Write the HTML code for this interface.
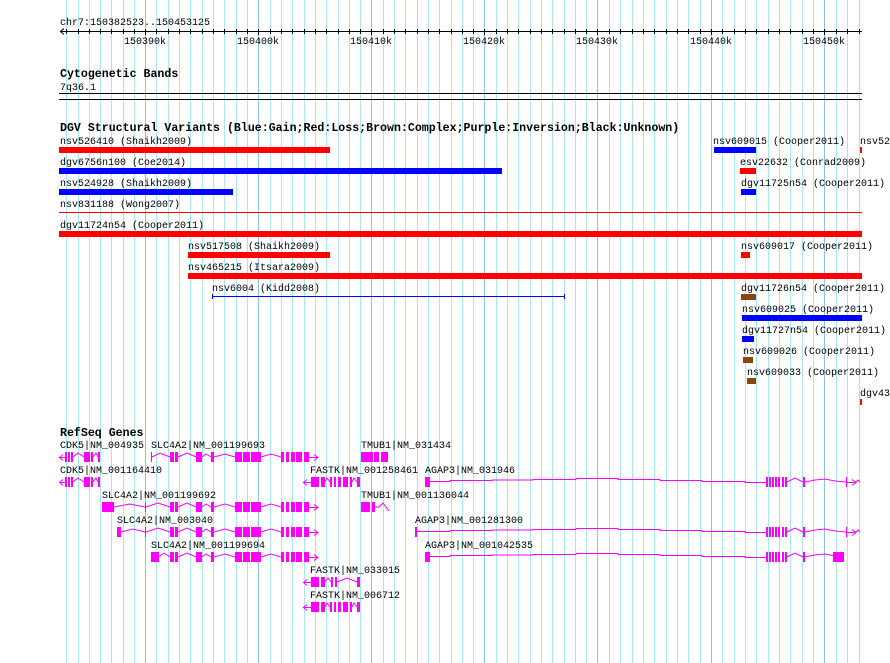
<!DOCTYPE html>
<html><head><meta charset="utf-8"><style>
html,body{margin:0;padding:0;background:#fff;width:890px;height:663px;overflow:hidden}
svg{display:block}
text{font-family:"Liberation Mono",monospace;font-size:10px;fill:#000}
.b{font-weight:bold;font-size:11.6px}
.g line{stroke:#a8e6f0;stroke-width:1}
.g line.m{stroke:#8cc4e6}
.mg{fill:#f0f}
.in{fill:none;stroke:#f0f;stroke-width:1}
</style></head><body>
<svg width="890" height="663" viewBox="0 0 890 663" xmlns="http://www.w3.org/2000/svg">
<g class="g">
<line x1="66.5" y1="0" x2="66.5" y2="663"/><line x1="78.5" y1="0" x2="78.5" y2="663"/><line x1="89.5" y1="0" x2="89.5" y2="663"/><line x1="100.5" y1="0" x2="100.5" y2="663"/><line x1="111.5" y1="0" x2="111.5" y2="663"/><line x1="123.5" y1="0" x2="123.5" y2="663"/><line x1="134.5" y1="0" x2="134.5" y2="663"/><line class="m" x1="145.5" y1="0" x2="145.5" y2="663"/><line x1="156.5" y1="0" x2="156.5" y2="663"/><line x1="168.5" y1="0" x2="168.5" y2="663"/><line x1="179.5" y1="0" x2="179.5" y2="663"/><line x1="190.5" y1="0" x2="190.5" y2="663"/><line x1="202.5" y1="0" x2="202.5" y2="663"/><line x1="213.5" y1="0" x2="213.5" y2="663"/><line x1="224.5" y1="0" x2="224.5" y2="663"/><line x1="236.5" y1="0" x2="236.5" y2="663"/><line x1="247.5" y1="0" x2="247.5" y2="663"/><line class="m" x1="258.5" y1="0" x2="258.5" y2="663"/><line x1="270.5" y1="0" x2="270.5" y2="663"/><line x1="281.5" y1="0" x2="281.5" y2="663"/><line x1="292.5" y1="0" x2="292.5" y2="663"/><line x1="304.5" y1="0" x2="304.5" y2="663"/><line x1="315.5" y1="0" x2="315.5" y2="663"/><line x1="326.5" y1="0" x2="326.5" y2="663"/><line x1="338.5" y1="0" x2="338.5" y2="663"/><line x1="349.5" y1="0" x2="349.5" y2="663"/><line x1="360.5" y1="0" x2="360.5" y2="663"/><line class="m" x1="371.5" y1="0" x2="371.5" y2="663"/><line x1="383.5" y1="0" x2="383.5" y2="663"/><line x1="394.5" y1="0" x2="394.5" y2="663"/><line x1="405.5" y1="0" x2="405.5" y2="663"/><line x1="417.5" y1="0" x2="417.5" y2="663"/><line x1="428.5" y1="0" x2="428.5" y2="663"/><line x1="439.5" y1="0" x2="439.5" y2="663"/><line x1="451.5" y1="0" x2="451.5" y2="663"/><line x1="462.5" y1="0" x2="462.5" y2="663"/><line x1="473.5" y1="0" x2="473.5" y2="663"/><line class="m" x1="484.5" y1="0" x2="484.5" y2="663"/><line x1="496.5" y1="0" x2="496.5" y2="663"/><line x1="507.5" y1="0" x2="507.5" y2="663"/><line x1="518.5" y1="0" x2="518.5" y2="663"/><line x1="530.5" y1="0" x2="530.5" y2="663"/><line x1="541.5" y1="0" x2="541.5" y2="663"/><line x1="552.5" y1="0" x2="552.5" y2="663"/><line x1="564.5" y1="0" x2="564.5" y2="663"/><line x1="575.5" y1="0" x2="575.5" y2="663"/><line x1="586.5" y1="0" x2="586.5" y2="663"/><line class="m" x1="597.5" y1="0" x2="597.5" y2="663"/><line x1="609.5" y1="0" x2="609.5" y2="663"/><line x1="620.5" y1="0" x2="620.5" y2="663"/><line x1="632.5" y1="0" x2="632.5" y2="663"/><line x1="643.5" y1="0" x2="643.5" y2="663"/><line x1="654.5" y1="0" x2="654.5" y2="663"/><line x1="666.5" y1="0" x2="666.5" y2="663"/><line x1="677.5" y1="0" x2="677.5" y2="663"/><line x1="688.5" y1="0" x2="688.5" y2="663"/><line x1="700.5" y1="0" x2="700.5" y2="663"/><line class="m" x1="711.5" y1="0" x2="711.5" y2="663"/><line x1="722.5" y1="0" x2="722.5" y2="663"/><line x1="734.5" y1="0" x2="734.5" y2="663"/><line x1="745.5" y1="0" x2="745.5" y2="663"/><line x1="756.5" y1="0" x2="756.5" y2="663"/><line x1="768.5" y1="0" x2="768.5" y2="663"/><line x1="779.5" y1="0" x2="779.5" y2="663"/><line x1="790.5" y1="0" x2="790.5" y2="663"/><line x1="802.5" y1="0" x2="802.5" y2="663"/><line x1="813.5" y1="0" x2="813.5" y2="663"/><line class="m" x1="824.5" y1="0" x2="824.5" y2="663"/><line x1="836.5" y1="0" x2="836.5" y2="663"/><line x1="847.5" y1="0" x2="847.5" y2="663"/><line x1="859.5" y1="0" x2="859.5" y2="663"/>
</g>

<!-- ruler -->
<text x="60" y="25">chr7:150382523..150453125</text>
<line x1="60" y1="31.5" x2="862" y2="31.5" stroke="#000"/>
<polyline points="64,28.5 60.5,31.5 64,34.5" fill="none" stroke="#000"/>
<g stroke="#000">
<path d="M66.5 29v5M78.5 29v5M89.5 29v5M100.5 29v5M111.5 29v5M123.5 29v5M134.5 29v5M145.5 29v6M156.5 29v5M168.5 29v5M179.5 29v5M190.5 29v5M202.5 29v5M213.5 29v5M224.5 29v5M236.5 29v5M247.5 29v5M258.5 29v6M270.5 29v5M281.5 29v5M292.5 29v5M304.5 29v5M315.5 29v5M326.5 29v5M338.5 29v5M349.5 29v5M360.5 29v5M371.5 29v6M383.5 29v5M394.5 29v5M405.5 29v5M417.5 29v5M428.5 29v5M439.5 29v5M451.5 29v5M462.5 29v5M473.5 29v5M484.5 29v6M496.5 29v5M507.5 29v5M518.5 29v5M530.5 29v5M541.5 29v5M552.5 29v5M564.5 29v5M575.5 29v5M586.5 29v5M597.5 29v6M609.5 29v5M620.5 29v5M632.5 29v5M643.5 29v5M654.5 29v5M666.5 29v5M677.5 29v5M688.5 29v5M700.5 29v5M711.5 29v6M722.5 29v5M734.5 29v5M745.5 29v5M756.5 29v5M768.5 29v5M779.5 29v5M790.5 29v5M802.5 29v5M813.5 29v5M824.5 29v6M836.5 29v5M847.5 29v5M859.5 29v5"/>
</g>
<text x="124" y="44">150390k</text><text x="237" y="44">150400k</text><text x="350" y="44">150410k</text><text x="463" y="44">150420k</text><text x="576" y="44">150430k</text><text x="690" y="44">150440k</text><text x="803" y="44">150450k</text>

<!-- cytoband -->
<text class="b" x="60" y="77">Cytogenetic Bands</text>
<text x="60" y="90">7q36.1</text>
<rect x="59" y="93" width="803" height="1" fill="#000"/>
<rect x="59" y="99" width="803" height="1" fill="#000"/>

<!-- DGV -->
<text class="b" x="60" y="131">DGV Structural Variants (Blue:Gain;Red:Loss;Brown:Complex;Purple:Inversion;Black:Unknown)</text>
<text x="60" y="144">nsv526410 (Shaikh2009)</text><rect x="59" y="147" width="271" height="6" fill="#f00"/>
<text x="60" y="165">dgv6756n100 (Coe2014)</text><rect x="59" y="168" width="443" height="6" fill="#00f"/>
<text x="60" y="186">nsv524928 (Shaikh2009)</text><rect x="59" y="189" width="174" height="6" fill="#00f"/>
<text x="60" y="207">nsv831188 (Wong2007)</text><rect x="59" y="212" width="803" height="1" fill="#f00"/>
<text x="60" y="228">dgv11724n54 (Cooper2011)</text><rect x="59" y="231" width="803" height="6" fill="#f00"/>
<text x="188" y="249">nsv517508 (Shaikh2009)</text><rect x="188" y="252" width="142" height="6" fill="#f00"/>
<text x="188" y="270">nsv465215 (Itsara2009)</text><rect x="188" y="273" width="674" height="6" fill="#f00"/>
<text x="212" y="291">nsv6004 (Kidd2008)</text>
<path d="M212 296.5H565M212.5 294v5M564.5 294v5" stroke="#00f" fill="none"/>

<text x="713" y="144">nsv609015 (Cooper2011)</text><rect x="714" y="147" width="42" height="6" fill="#00f"/>
<text x="860" y="144">nsv52</text><rect x="860" y="147" width="2" height="6" fill="#f00"/>
<text x="740" y="165">esv22632 (Conrad2009)</text><rect x="740" y="168" width="16" height="6" fill="#f00"/>
<text x="741" y="186">dgv11725n54 (Cooper2011)</text><rect x="741" y="189" width="15" height="6" fill="#00f"/>
<text x="741" y="249">nsv609017 (Cooper2011)</text><rect x="741" y="252" width="9" height="6" fill="#f00"/>
<text x="741" y="291">dgv11726n54 (Cooper2011)</text><rect x="741" y="294" width="15" height="6" fill="#8b4513"/>
<text x="742" y="312">nsv609025 (Cooper2011)</text><rect x="742" y="315" width="120" height="6" fill="#00f"/>
<text x="742" y="333">dgv11727n54 (Cooper2011)</text><rect x="742" y="336" width="12" height="6" fill="#00f"/>
<text x="743" y="354">nsv609026 (Cooper2011)</text><rect x="743" y="357" width="10" height="6" fill="#8b4513"/>
<text x="747" y="375">nsv609033 (Cooper2011)</text><rect x="747" y="378" width="9" height="6" fill="#8b4513"/>
<text x="860" y="396">dgv43</text><rect x="860" y="399" width="2" height="6" fill="#f00"/>

<!-- RefSeq -->
<text class="b" x="60" y="436">RefSeq Genes</text>
<defs>
<g id="slcTail">
<rect class="mg" x="196" y="-5" width="6" height="10"/><rect class="mg" x="211" y="-5" width="3" height="10"/>
<rect class="mg" x="235" y="-5" width="7" height="10"/><rect class="mg" x="243" y="-5" width="7" height="10"/><rect class="mg" x="251" y="-5" width="10" height="10"/>
<rect class="mg" x="281" y="-5" width="3" height="10"/><rect class="mg" x="286" y="-5" width="3" height="10"/><rect class="mg" x="291" y="-5" width="4" height="10"/><rect class="mg" x="296" y="-5" width="6" height="10"/><rect class="mg" x="304" y="-5" width="5" height="10"/>
<polyline class="in" points="202,0 206,-3 211,0"/><polyline class="in" points="214,0 225,-3 235,0"/><polyline class="in" points="261,0 271,-3 281,0"/>
<polyline class="in" points="309,0.5 318,0.5"/><polyline class="in" points="314,-2.5 318,0.5 314,3.5"/>
</g>
<g id="cdk">
<polyline class="in" points="59,0.5 65,0.5"/><polyline class="in" points="63,-2.5 59.5,0.5 63,3.5"/>
<rect class="mg" x="65" y="-5" width="2" height="10"/><rect class="mg" x="68" y="-5" width="2" height="10"/><rect class="mg" x="71" y="-5" width="2" height="10"/>
<polyline class="in" points="73,0 78,-4 84,0"/>
<rect class="mg" x="84" y="-5" width="6" height="10"/><rect class="mg" x="91" y="-5" width="2" height="10"/>
<polyline class="in" points="93,0 96,-4 98,0"/><rect class="mg" x="98" y="-5" width="2" height="10"/>
</g>
<g id="fastk">
<polyline class="in" points="303,0.5 311,0.5"/><polyline class="in" points="307,-2.5 303.5,0.5 307,3.5"/>
<rect class="mg" x="311" y="-5" width="8" height="10"/><rect class="mg" x="321" y="-5" width="4" height="10"/>
<polyline class="in" points="325,0 327,-4 330,0"/>
<rect class="mg" x="330" y="-5" width="2" height="10"/><rect class="mg" x="334" y="-5" width="2" height="10"/><rect class="mg" x="338" y="-5" width="3" height="10"/>
<rect class="mg" x="343" y="-5" width="5" height="10"/><rect class="mg" x="350" y="-5" width="2" height="10"/>
<polyline class="in" points="352,0 354,-4 357,0"/><rect class="mg" x="357" y="-5" width="3" height="10"/>
</g>
<g id="agap">
<polyline class="in" points="430,-0.5 450,-0.5 450,-1.5 492,-1.5 492,-2 533,-2 533,-2.5 576,-2.5 576,-3.5 618,-3.5 618,-2.5 660,-2.5 660,-1.5 702,-1.5 702,-0.5 745,-0.5 745,0.5 766,0.5"/>
<rect class="mg" x="766" y="-5" width="2" height="10"/><rect class="mg" x="769" y="-5" width="2" height="10"/><rect class="mg" x="772" y="-5" width="2" height="10"/><rect class="mg" x="775" y="-5" width="2" height="10"/><rect class="mg" x="778" y="-5" width="2" height="10"/><rect class="mg" x="782" y="-5" width="2" height="10"/><rect class="mg" x="785" y="-5" width="2" height="10"/>
<polyline class="in" points="787,0 795,-4 803,0"/><rect class="mg" x="803" y="-5" width="2" height="10"/>
<polyline class="in" points="805,0 815,-2 825,-3 835,-1"/>
</g>
</defs>

<!-- row1 y=457 -->
<text x="60" y="448">CDK5|NM_004935</text>
<use href="#cdk" y="457"/>
<text x="151" y="448">SLC4A2|NM_001199693</text>
<g transform="translate(0,457)"><rect class="mg" x="151" y="-5" width="1" height="10"/><polyline class="in" points="152,0 160,-4 170,0"/><rect class="mg" x="170" y="-5" width="4" height="10"/><rect class="mg" x="175" y="-5" width="3" height="10"/><polyline class="in" points="178,0 187,-4 196,0"/></g>
<use href="#slcTail" y="457"/>
<text x="361" y="448">TMUB1|NM_031434</text>
<rect class="mg" x="361" y="452" width="12" height="10"/><rect class="mg" x="374" y="452" width="5" height="10"/><rect class="mg" x="381" y="452" width="7" height="10"/>

<!-- row2 y=482 -->
<text x="60" y="473">CDK5|NM_001164410</text>
<use href="#cdk" y="482"/>
<text x="310" y="473">FASTK|NM_001258461</text>
<use href="#fastk" y="482"/>
<text x="425" y="473">AGAP3|NM_031946</text>
<rect class="mg" x="425" y="477" width="5" height="10"/>
<use href="#agap" y="482"/>
<g transform="translate(0,482)"><polyline class="in" points="835,-1 846,0"/><rect class="mg" x="846" y="-5" width="1" height="10"/><polyline class="in" points="847,0.5 856,0.5"/><polyline class="in" points="852,-2.5 856,0.5 852,3.5"/><polyline class="in" points="856,0 858,-2 860,0"/></g>

<!-- row3 y=507 -->
<text x="102" y="498">SLC4A2|NM_001199692</text>
<g transform="translate(0,507)"><rect class="mg" x="102" y="-5" width="12" height="10"/><polyline class="in" points="114,0 130,-3 145,0"/><rect class="mg" x="145" y="-5" width="1" height="10"/><polyline class="in" points="146,0 158,-4 170,0"/><rect class="mg" x="170" y="-5" width="4" height="10"/><rect class="mg" x="175" y="-5" width="3" height="10"/><polyline class="in" points="178,0 187,-4 196,0"/></g>
<use href="#slcTail" y="507"/>
<text x="361" y="498">TMUB1|NM_001136044</text>
<g transform="translate(0,507)"><rect class="mg" x="361" y="-5" width="9" height="10"/><rect class="mg" x="372" y="-5" width="3" height="10"/><polyline class="in" points="375,0 379,0 383,-4 389,4"/></g>

<!-- row4 y=532 -->
<text x="117" y="523">SLC4A2|NM_003040</text>
<g transform="translate(0,532)"><rect class="mg" x="117" y="-5" width="4" height="10"/><polyline class="in" points="121,0 133,-3 145,0"/><rect class="mg" x="145" y="-5" width="1" height="10"/><polyline class="in" points="146,0 158,-4 170,0"/><rect class="mg" x="170" y="-5" width="4" height="10"/><rect class="mg" x="175" y="-5" width="3" height="10"/><polyline class="in" points="178,0 187,-4 196,0"/></g>
<use href="#slcTail" y="532"/>
<text x="415" y="523">AGAP3|NM_001281300</text>
<g transform="translate(0,532)"><rect class="mg" x="415" y="-5" width="2" height="10"/><polyline class="in" points="417,-0.5 430,-0.5"/><polyline class="in" points="835,-1 846,0"/><rect class="mg" x="846" y="-5" width="1" height="10"/><polyline class="in" points="847,0.5 856,0.5"/><polyline class="in" points="852,-2.5 856,0.5 852,3.5"/><polyline class="in" points="856,0 858,-2 860,0"/></g>
<use href="#agap" y="532"/>

<!-- row5 y=557 -->
<text x="151" y="548">SLC4A2|NM_001199694</text>
<g transform="translate(0,557)"><rect class="mg" x="151" y="-5" width="8" height="10"/><polyline class="in" points="159,0 164,-4 170,0"/><rect class="mg" x="170" y="-5" width="4" height="10"/><rect class="mg" x="175" y="-5" width="3" height="10"/><polyline class="in" points="178,0 187,-4 196,0"/></g>
<use href="#slcTail" y="557"/>
<text x="425" y="548">AGAP3|NM_001042535</text>
<rect class="mg" x="425" y="552" width="5" height="10"/>
<use href="#agap" y="557"/>
<g transform="translate(0,557)"><polyline class="in" points="835,-1 833,0"/><rect class="mg" x="833" y="-5" width="11" height="10"/></g>

<!-- row6 y=582 -->
<text x="310" y="573">FASTK|NM_033015</text>
<g transform="translate(0,582)"><polyline class="in" points="303,0.5 311,0.5"/><polyline class="in" points="307,-2.5 303.5,0.5 307,3.5"/><rect class="mg" x="311" y="-5" width="8" height="10"/><rect class="mg" x="321" y="-5" width="4" height="10"/><polyline class="in" points="325,0 328,-4 331,0"/><rect class="mg" x="331" y="-5" width="2" height="10"/><rect class="mg" x="335" y="-5" width="2" height="10"/><polyline class="in" points="337,0 347,-4 357,0"/><rect class="mg" x="357" y="-5" width="3" height="10"/></g>

<!-- row7 y=607 -->
<text x="310" y="598">FASTK|NM_006712</text>
<use href="#fastk" y="607"/>
</svg>
</body></html>
